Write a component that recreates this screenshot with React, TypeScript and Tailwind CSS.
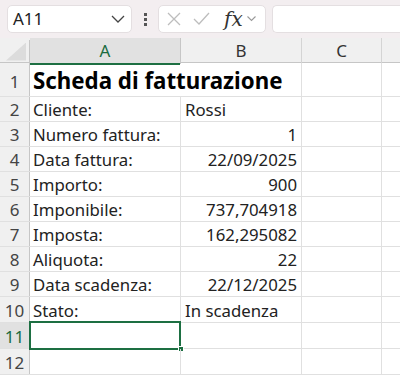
import React from "react";

const rows: { a: string; b: string; right?: boolean }[] = [
  { a: "Cliente:", b: "Rossi" },
  { a: "Numero fattura:", b: "1", right: true },
  { a: "Data fattura:", b: "22/09/2025", right: true },
  { a: "Importo:", b: "900", right: true },
  { a: "Imponibile:", b: "737,704918", right: true },
  { a: "Imposta:", b: "162,295082", right: true },
  { a: "Aliquota:", b: "22", right: true },
  { a: "Data scadenza:", b: "22/12/2025", right: true },
  { a: "Stato:", b: "In scadenza" },
  { a: "", b: "" },
  { a: "", b: "" },
];

const font = { fontFamily: '"Noto Sans", "Open Sans", sans-serif' };

export default function App() {
  return (
    <div className="w-[400px] h-[378px] overflow-hidden bg-white text-[#222]" style={font}>
      {/* toolbar */}
      <div className="h-[38px] bg-[#f3eef0] flex items-center pl-[7px] gap-0">
        <div className="w-[125px] h-[28px] bg-white rounded-[5px] border border-[#e4dfe1] flex items-center justify-between pl-[5px] pr-[6px]">
          <span className="text-[17px] text-[#222]">A11</span>
          <svg width="14" height="8" viewBox="0 0 14 8" fill="none" stroke="#444" strokeWidth="1.3">
            <path d="M1 1l6 6 6-6" />
          </svg>
        </div>
        <div className="w-[26px] flex flex-col items-center justify-center gap-[2px]">
          <div className="w-[3px] h-[3px] bg-[#555]" />
          <div className="w-[3px] h-[3px] bg-[#555]" />
          <div className="w-[3px] h-[3px] bg-[#555]" />
        </div>
        <div className="w-[108px] h-[28px] bg-white rounded-[5px] border border-[#e4dfe1] flex items-center pl-[7px] gap-[0px]">
          <svg width="16" height="16" viewBox="0 0 16 16" stroke="#bdbdbd" strokeWidth="1.3" fill="none">
            <path d="M2 2l12 12M14 2L2 14" />
          </svg>
          <svg className="ml-[11px]" width="17" height="14" viewBox="0 0 17 14" stroke="#bdbdbd" strokeWidth="1.3" fill="none">
            <path d="M1 7l5 5L16 1" />
          </svg>
          <span className="ml-[14px] text-[20px] italic text-[#333] leading-none" style={{ fontFamily: '"DejaVu Serif", "Liberation Serif", serif' }}>
            fx
          </span>
          <svg className="ml-[4px]" width="9" height="6" viewBox="0 0 9 6" fill="none" stroke="#999" strokeWidth="1.1">
            <path d="M0.5 0.5l4 4 4-4" />
          </svg>
        </div>
        <div className="ml-[6px] flex-1 h-[28px] bg-white rounded-l-[5px] border border-r-0 border-[#e4dfe1]" />
      </div>

      {/* column header */}
      <div className="grid grid-cols-[30px_151px_121px_80px_1fr] h-[25px] bg-[#f0f0f0] border-b border-[#c6c6c6] text-[17px] text-[#333]">
        <div className="relative border-r border-[#c6c6c6] mt-[2px]">
          <div
            className="absolute right-[3px] bottom-[3px] w-[20px] h-[18px] bg-[#dcdcdc]"
            style={{ clipPath: "polygon(100% 0, 100% 100%, 0 100%)" }}
          />
        </div>
        <div className="bg-[#e1e1e1] border-r border-[#c6c6c6] flex items-center justify-center text-[#1a6b3f] relative">
          A
          <div className="absolute left-0 right-0 -bottom-[1px] h-[2px] bg-[#1d6f42]" />
        </div>
        <div className="border-r border-[#d4d4d4] flex items-center justify-center">B</div>
        <div className="border-r border-[#d4d4d4] flex items-center justify-center">C</div>
        <div />
      </div>

      {/* title row */}
      <div className="grid grid-cols-[30px_151px_121px_80px_1fr] h-[34px] border-b border-[#e0e0e0]">
        <div className="bg-[#f0f0f0] border-r border-[#c6c6c6] flex items-end justify-center pb-[2px] text-[17px] text-[#444]">1</div>
        <div className="relative border-r border-transparent">
          <span className="absolute left-[3px] bottom-[2px] whitespace-nowrap text-[22.3px] font-bold text-black leading-none pb-[2px]">
            Scheda di fatturazione
          </span>
        </div>
        <div className="border-r border-[#e0e0e0]" />
        <div className="border-r border-[#e0e0e0]" />
        <div />
      </div>

      {rows.map((r, i) => {
        const n = i + 2;
        const sel = n === 11;
        return (
          <div
            key={n}
            className={
              "grid grid-cols-[30px_151px_121px_80px_1fr] border-b border-[#e0e0e0] text-[16.8px] leading-[22px] " +
              (n >= 10 ? "h-[26px]" : "h-[25px]")
            }
          >
            <div
              className={
                "border-r border-[#c6c6c6] flex items-end justify-center pb-[0px] text-[17px] " +
                (sel ? "bg-[#e1e1e1] text-[#1a6b3f]" : "bg-[#f0f0f0] text-[#444]")
              }
            >
              {n}
            </div>
            <div className="relative border-r border-[#e0e0e0] flex items-end pl-[3px] pb-[0px] whitespace-nowrap">
              {r.a}
              {sel && (
                <>
                  <div className="absolute -left-[1px] -top-[2px] -right-[1px] -bottom-[2px] border-2 border-[#1d6f42]" />
                  <div className="absolute -right-[4px] -bottom-[4px] w-[6px] h-[6px] bg-[#1d6f42] border border-white" />
                </>
              )}
            </div>
            <div
              className={
                "border-r border-[#e0e0e0] flex items-end pb-[0px] whitespace-nowrap " +
                (r.right ? "justify-end pr-[4px]" : "pl-[4px]")
              }
            >
              {r.b}
            </div>
            <div className="border-r border-[#e0e0e0]" />
            <div />
          </div>
        );
      })}
    </div>
  );
}
